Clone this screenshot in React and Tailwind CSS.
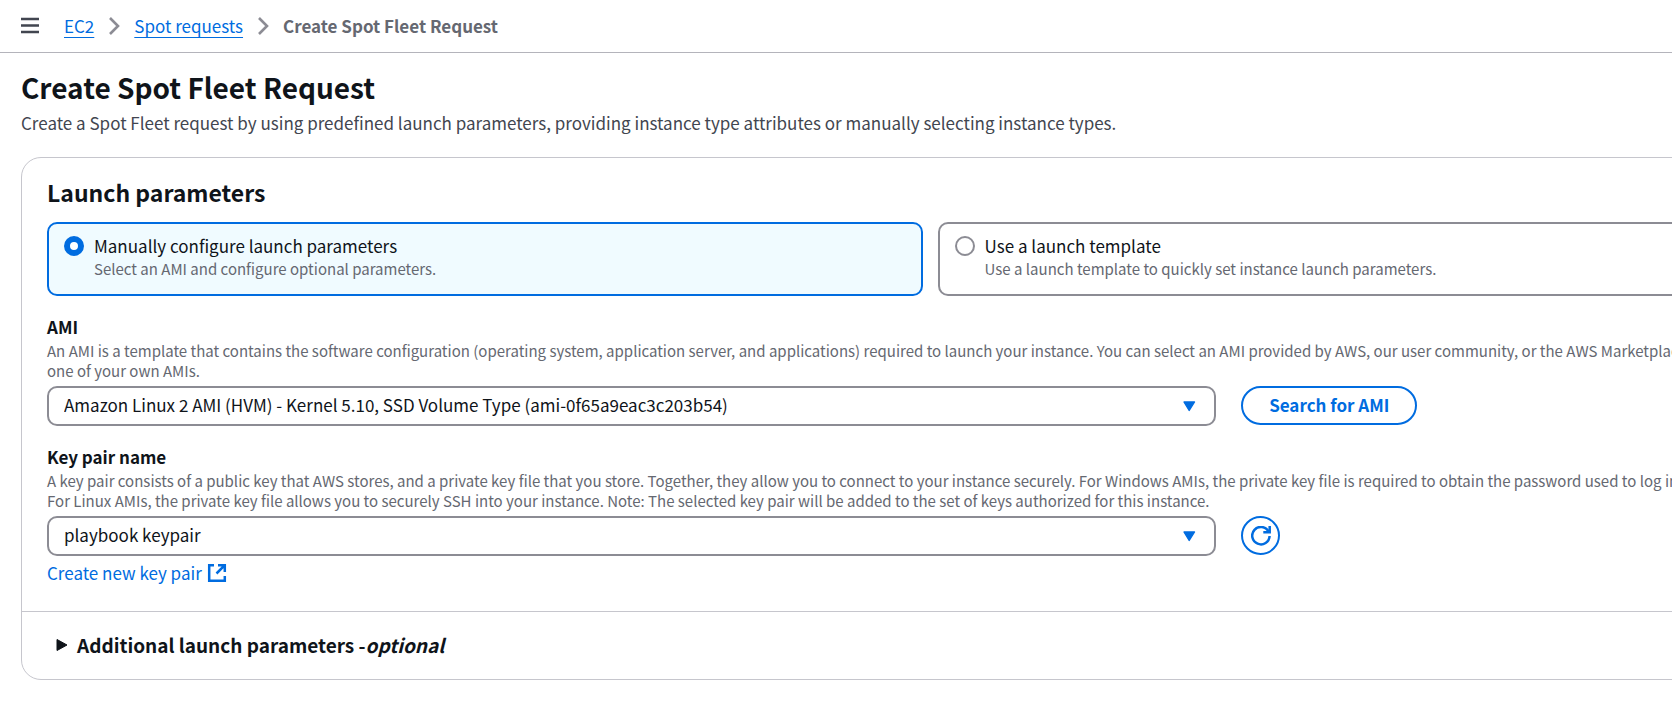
import { useState } from 'react';

const launchOptions = [
    {
        value: 'manual',
        label: 'Manually configure launch parameters',
        description: 'Select an AMI and configure optional parameters.',
    },
    {
        value: 'template',
        label: 'Use a launch template',
        description: 'Use a launch template to quickly set instance launch parameters.',
    },
];

const MenuIcon = () => (
    <svg className="w-5 h-5" viewBox="0 0 20 20" fill="none" stroke="currentColor" strokeWidth="2.4" aria-hidden="true">
        <path d="M1 3h18M1 9.5h18M1 16h18" />
    </svg>
);

const ChevronIcon = () => (
    <svg className="w-5 h-5 text-[#8c8c94]" viewBox="0 0 20 20" fill="none" stroke="currentColor" strokeWidth="2.6" aria-hidden="true">
        <path d="M6 2l8 8-8 8" />
    </svg>
);

const CaretIcon = () => (
    <svg className="pointer-events-none absolute right-5 top-1/2 -translate-y-1/2 w-3.5 h-3 text-[#006ce0]" viewBox="0 0 14 12" fill="currentColor" stroke="currentColor" strokeWidth="1.4" strokeLinejoin="round" aria-hidden="true">
        <path d="M2 2h10.5L7.2 10.5z" />
    </svg>
);

const ExternalIcon = () => (
    <svg className="w-5 h-5" viewBox="0 0 20 20" fill="none" stroke="currentColor" strokeWidth="2.5" aria-hidden="true">
        <path d="M7 2.2H2.2v15.6h15.6V13M11 2.2h6.8V9M17.8 2.2L9.5 10.5" />
    </svg>
);

const RefreshIcon = () => (
    <svg className="w-5 h-5" viewBox="0 0 20 20" fill="none" stroke="currentColor" strokeWidth="2.5" aria-hidden="true">
        <path d="M18.6 10A8.7 8.7 0 1 1 17.6 5.6" />
        <path d="M12.3 6.3h6.4V0" />
    </svg>
);

const Field = ({ id, label, description, value, children }) => (
    <div>
        <label htmlFor={id} className="block text-[17px] leading-[22px] font-bold">{label}</label>
        <p className="text-[15px] leading-5 text-[#656871] whitespace-nowrap mt-[3px] mb-[5px]">
            {description[0]}
            <br />
            {description[1]}
        </p>
        <div className="grid grid-cols-3 gap-x-[25px]">
            <div className="relative col-span-2">
                <select id={id} className="block w-full h-10 appearance-none rounded-[10px] border-2 border-[#8c8c94] bg-white pl-[15px] pr-12 pb-0.5 text-[17px]">
                    <option>{value}</option>
                </select>
                <CaretIcon />
            </div>
            <div>{children}</div>
        </div>
    </div>
);

const Breadcrumbs = () => (
    <nav aria-label="Breadcrumbs" className="flex items-center h-[53px] border-b border-[#b4b4bb] pl-5">
        <button type="button" aria-label="Open navigation" className="text-[#424650]">
            <MenuIcon />
        </button>
        <ol className="flex items-center gap-2.5 pl-6 text-[17px] leading-5 text-[#006ce0]">
            <li><a href="#ec2" className="underline underline-offset-4">EC2</a></li>
            <li><ChevronIcon /></li>
            <li><a href="#spot" className="underline underline-offset-4">Spot requests</a></li>
            <li><ChevronIcon /></li>
            <li className="font-bold text-[#656871]" aria-current="page">Create Spot Fleet Request</li>
        </ol>
    </nav>
);

const App = () => {
    const [launchMode, setLaunchMode] = useState('manual');

    return (
        <div className="min-h-screen overflow-x-hidden bg-white font-['Noto_Sans_CJK_SC','Open_Sans',sans-serif] text-[#0f141a]">
            <Breadcrumbs />
            {/* The form is wider than the viewport, the rest is clipped on the right */}
            <main className="w-[110%] pl-[21px] pt-4">
                <h1 className="text-[28px] leading-9 font-bold">Create Spot Fleet Request</h1>
                <p className="mt-1.5 text-[17px] leading-6 text-[#424650]">
                    Create a Spot Fleet request by using predefined launch parameters, providing instance type attributes or manually selecting instance types.
                </p>

                <section className="mt-[22px] rounded-[20px] border border-[#c6c6cd]">
                    <div className="px-[25px] pt-5 pb-[26px]">
                        <h2 className="text-[23px] leading-7 font-bold">Launch parameters</h2>

                        <div role="radiogroup" aria-label="Launch parameters" className="mt-4 grid grid-cols-2 gap-[15px]">
                            {launchOptions.map((option) => (
                                <label
                                    key={option.value}
                                    className={`flex items-start gap-2.5 h-[74px] rounded-[10px] border-2 px-[15px] pt-3 ${launchMode === option.value ? 'border-[#006ce0] bg-[#f0fbff]' : 'border-[#8c8c94]'}`}
                                >
                                    <input
                                        type="radio"
                                        name="launch-mode"
                                        value={option.value}
                                        checked={launchMode === option.value}
                                        onChange={() => setLaunchMode(option.value)}
                                        className="w-5 h-5 shrink-0 appearance-none rounded-full border-2 border-[#8c8c94] bg-white checked:border-[6px] checked:border-[#006ce0]"
                                    />
                                    <span>
                                        <span className="block text-[17px] leading-5">{option.label}</span>
                                        <span className="block mt-[3px] text-[15px] leading-5 text-[#656871]">{option.description}</span>
                                    </span>
                                </label>
                            ))}
                        </div>

                        <div className="mt-5 flex flex-col gap-5">
                            <Field
                                id="ami"
                                label="AMI"
                                description={[
                                    'An AMI is a template that contains the software configuration (operating system, application server, and applications) required to launch your instance. You can select an AMI provided by AWS, our user community, or the AWS Marketplace',
                                    'one of your own AMIs.',
                                ]}
                                value="Amazon Linux 2 AMI (HVM) - Kernel 5.10, SSD Volume Type (ami-0f65a9eac3c203b54)"
                            >
                                <button type="button" className="h-[39px] rounded-full border-2 border-[#006ce0] px-[26px] pb-0.5 text-[17px] font-bold text-[#006ce0]">
                                    Search for AMI
                                </button>
                            </Field>

                            <div>
                                <Field
                                    id="key-pair"
                                    label="Key pair name"
                                    description={[
                                        'A key pair consists of a public key that AWS stores, and a private key file that you store. Together, they allow you to connect to your instance securely. For Windows AMIs, the private key file is required to obtain the password used to log in',
                                        'For Linux AMIs, the private key file allows you to securely SSH into your instance. Note: The selected key pair will be added to the set of keys authorized for this instance.',
                                    ]}
                                    value="playbook keypair"
                                >
                                    <button type="button" aria-label="Refresh key pairs" className="flex items-center justify-center w-[39px] h-[39px] rounded-full border-2 border-[#006ce0] text-[#006ce0]">
                                        <RefreshIcon />
                                    </button>
                                </Field>
                                <a href="#new-key-pair" className="mt-[5px] inline-flex items-center gap-[5px] text-[17px] leading-6 text-[#006ce0]">
                                    Create new key pair
                                    <ExternalIcon />
                                </a>
                            </div>
                        </div>
                    </div>

                    <div className="border-t border-[#c6c6cd] px-[34px] pt-[19px] pb-5">
                        <button type="button" aria-expanded="false" className="flex items-center gap-[9px] text-[19px] leading-7 font-bold">
                            <svg className="w-3 h-3" viewBox="0 0 12 12" fill="currentColor" stroke="currentColor" strokeLinejoin="round" aria-hidden="true">
                                <path d="M1 .5v11l10-5.5z" />
                            </svg>
                            <span>Additional launch parameters -<em>optional</em></span>
                        </button>
                    </div>
                </section>
            </main>
        </div>
    );
};

export default App;
